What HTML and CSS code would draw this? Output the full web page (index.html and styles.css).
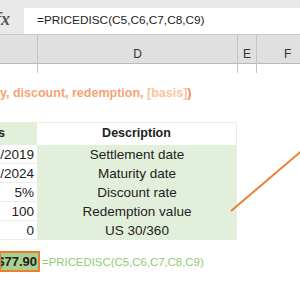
FILE: index.html
```html
<!DOCTYPE html>
<html lang="en">
<head>
    <meta charset="UTF-8">
    <title>PRICEDISC example</title>
    <link rel="stylesheet" href="styles.css">
</head>
<body>

    <!-- Formula bar -->
    <div class="formula-bar">
        <span class="fx">fx</span>
        <div class="formula-input">=PRICEDISC(C5,C6,C7,C8,C9)</div>
    </div>

    <!-- Column headers (C is scrolled mostly out of view) -->
    <div class="col-heads">
        <div class="col-head"></div>
        <div class="col-head">D</div>
        <div class="col-head">E</div>
        <div class="col-head last">F</div>
    </div>

    <div class="sheet">
        <div class="syntax">y, discount, redemption, <span class="opt">[basis]</span><span class="paren">)</span></div>

        <div class="args">
            <div class="cell head left">Arguments</div>
            <div class="cell head right">Description</div>

            <div class="cell left">1/1/2019</div>
            <div class="cell right">Settlement date</div>
            <div class="cell left">1/1/2024</div>
            <div class="cell right">Maturity date</div>
            <div class="cell left">5%</div>
            <div class="cell right">Discount rate</div>
            <div class="cell left">100</div>
            <div class="cell right">Redemption value</div>
            <div class="cell left">0</div>
            <div class="cell right">US 30/360</div>
        </div>

        <div class="result-row">
            <div class="result">$77.90</div>
            <div class="result-formula">=PRICEDISC(C5,C6,C7,C8,C9)</div>
        </div>
    </div>

    <!-- Callout line -->
    <svg class="callout" width="300" height="300" viewBox="0 0 300 300">
        <line x1="312" y1="142" x2="231" y2="211" stroke="#ee7d2f" stroke-width="2"/>
    </svg>

</body>
</html>
```

FILE: styles.css
```css
body {
    margin: 0;
    width: 300px;
    height: 300px;
    overflow: hidden;
    background: #fff;
    font-family: "Liberation Sans", Arial, sans-serif;
    position: relative;
}

/* Formula bar */
.formula-bar {
    display: flex;
    align-items: flex-end;
    height: 34px;
    background: #e9e9e9;
    border-bottom: 1px solid #c8c8c8;
}

.fx {
    width: 24px;
    height: 26px;
    margin-left: -5px;
    font-family: "Liberation Serif", serif;
    font-style: italic;
    font-weight: bold;
    font-size: 18px;
    color: #555;
    line-height: 22px;
}

.formula-input {
    flex: 1;
    height: 26px;
    margin-left: 5px;
    background: #fff;
    padding-left: 13px;
    font-size: 11.8px;
    line-height: 24px;
    color: #222;
}

/* Column headers */
.col-heads {
    display: grid;
    grid-template-columns: 38px 200px 19px 1fr;
    height: 28px;
    background: #e0e0e0;
    border-bottom: 1px solid #b9b9b9;
}

.col-head {
    border-right: 1px solid #c4c4c4;
    text-align: center;
    font-size: 12px;
    line-height: 38px;
    color: #333;
}

.col-head.last {
    border-right: none;
    text-align: left;
    padding-left: 27px;
}

/* Sheet body */
.sheet {
    padding-top: 22px;
}

.syntax {
    height: 36px;
    font-size: 12.5px;
    font-weight: bold;
    color: #f4a475;
    line-height: 14px;
}

.syntax .opt {
    color: #f8c4a2;
}

.syntax .paren {
    color: #ef8a45;
}

.args {
    display: grid;
    grid-template-columns: 37px 200px;
    grid-template-rows: 22px;
    grid-auto-rows: 19px;
    width: 237px;
    border-top: 1px solid #e6f0df;
}

.cell {
    font-size: 13.5px;
    line-height: 19px;
    color: #222;
    overflow: hidden;
    white-space: nowrap;
}

.cell.left {
    direction: rtl;
    text-align: right;
    padding-right: 3px;
    border-bottom: 1px solid #ececec;
    background: #fff;
}

.cell.right {
    text-align: center;
    background: #e2efda;
}

.cell.head {
    font-weight: bold;
    font-size: 12.5px;
    line-height: 21px;
    border-bottom: none;
}

/* header of column C is centred in a wider column, only its tail shows */
.cell.head.left {
    background: #e2efda;
    padding-right: 32px;
}

.cell.head.right {
    background: #fff;
    border-right: 1px solid #e2efda;
}

/* Result */
.result-row {
    display: flex;
    align-items: center;
    margin-top: 11px;
}

.result {
    width: 36px;
    height: 17px;
    border: 2px solid #ee7d2f;
    background: #a9d08e;
    direction: rtl;
    overflow: hidden;
    white-space: nowrap;
    text-align: left;
    padding-right: 1px;
    font-size: 13px;
    font-weight: bold;
    line-height: 17px;
    color: #222;
    margin-left: -1px;
}

.result-formula {
    margin-left: 2px;
    font-size: 11.4px;
    color: #93c873;
}

/* Callout line over the sheet */
.callout {
    position: absolute;
    left: 0;
    top: 0;
    pointer-events: none;
}
```
